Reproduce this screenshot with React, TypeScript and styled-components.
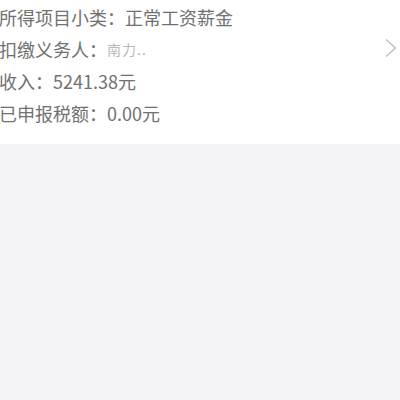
import styled, { createGlobalStyle } from "styled-components";

const GlobalStyle = createGlobalStyle`
  html, body {
    margin: 0;
    padding: 0;
    background: #f3f3f7;
    font-family: "Noto Sans CJK SC", "Noto Sans", sans-serif;
  }
`;

const Card = styled.section`
  background: #fff;
  padding: 1px 0 15px 0;
  position: relative;
`;

const Row = styled.div`
  display: flex;
  align-items: center;
  height: 32px;
  margin-left: -1px;
  font-size: 18px;
  color: #717171;
  white-space: nowrap;
`;

const Masked = styled.span`
  font-size: 14px;
  color: #b8b8b8;
  letter-spacing: 1px;
`;

const Arrow = styled.div`
  position: absolute;
  right: 2px;
  top: 38px;
  width: 14px;
  height: 20px;
  display: flex;
`;

const items = [
  { label: "所得项目小类：", value: "正常工资薪金" },
  { label: "扣缴义务人：", value: "", masked: "南力.." },
  { label: "收入：", value: "5241.38元" },
  { label: "已申报税额：", value: "0.00元" },
];

const App = () => (
  <>
    <GlobalStyle />
    <Card>
      {items.map((it) => (
        <Row key={it.label}>
          {it.label}
          {it.value}
          {it.masked ? <Masked>{it.masked}</Masked> : null}
        </Row>
      ))}
      <Arrow>
        <svg width="14" height="20" viewBox="0 0 14 20">
          <path d="M2 1.5 L11.5 10 L2 18.5" fill="none" stroke="#bdbdbd" strokeWidth="1.4" />
        </svg>
      </Arrow>
    </Card>
  </>
);

export default App;
